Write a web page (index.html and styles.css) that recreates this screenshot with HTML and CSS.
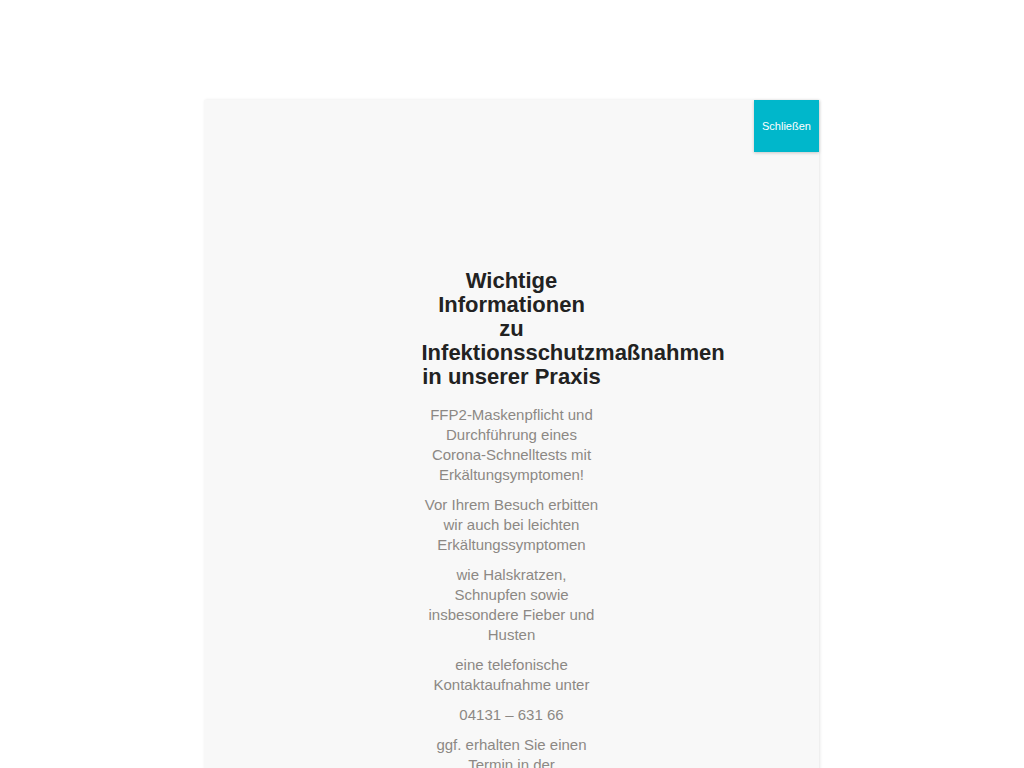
FILE: index.html
```html
<!DOCTYPE html>
<html lang="de">
<head>
<meta charset="utf-8">
<title>Wichtige Informationen</title>
<link rel="stylesheet" href="styles.css">
</head>
<body>
<div class="overlay">
  <div class="modal">
    <button class="close">Schließen</button>
    <div class="content">
      <h2 class="title">Wichtige Informationen<br>zu Infektionsschutzmaßnahmen in unserer Praxis</h2>
      <p>FFP2-Maskenpflicht und Durchführung eines Corona-Schnelltests mit Erkältungsymptomen!</p>
      <p>Vor Ihrem Besuch erbitten wir auch bei leichten Erkältungssymptomen</p>
      <p>wie Halskratzen, Schnupfen sowie insbesondere Fieber und Husten</p>
      <p>eine telefonische Kontaktaufnahme unter</p>
      <p>04131 – 631 66</p>
      <p>ggf. erhalten Sie einen Termin in der Infektsprechstunde.</p>
      <p>Vielen Dank für Ihr Verständnis!</p>
    </div>
  </div>
</div>
</body>
</html>
```

FILE: styles.css
```css
html, body {
  margin: 0;
  padding: 0;
  background: #ffffff;
  overflow: hidden;
}
body {
  font-family: "Liberation Sans", Arial, sans-serif;
}
.overlay {
  padding-top: 100px;
}
.modal {
  position: relative;
  width: 615px;
  margin: 0 0 0 204px;
  min-height: 900px;
  background: #f8f8f8;
  box-shadow: 1px 0 3px rgba(0, 0, 0, 0.1);
}
.close {
  position: absolute;
  top: 0;
  right: 0;
  width: 65px;
  height: 52px;
  border: 0;
  padding: 0;
  background: #00b7cb;
  color: #ffffff;
  font-family: "Liberation Sans", Arial, sans-serif;
  font-size: 11px;
  box-shadow: 0 1px 3px rgba(0, 0, 0, 0.2);
  cursor: pointer;
}
.content {
  width: 180px;
  margin: 0 auto;
  padding-top: 169px;
  text-align: center;
}
.title {
  margin: 0 0 16px 0;
  font-size: 22px;
  line-height: 24px;
  font-weight: bold;
  color: #222222;
}
.content p {
  margin: 0 0 10px 0;
  font-size: 15px;
  line-height: 20px;
  color: #8c8884;
}
```
